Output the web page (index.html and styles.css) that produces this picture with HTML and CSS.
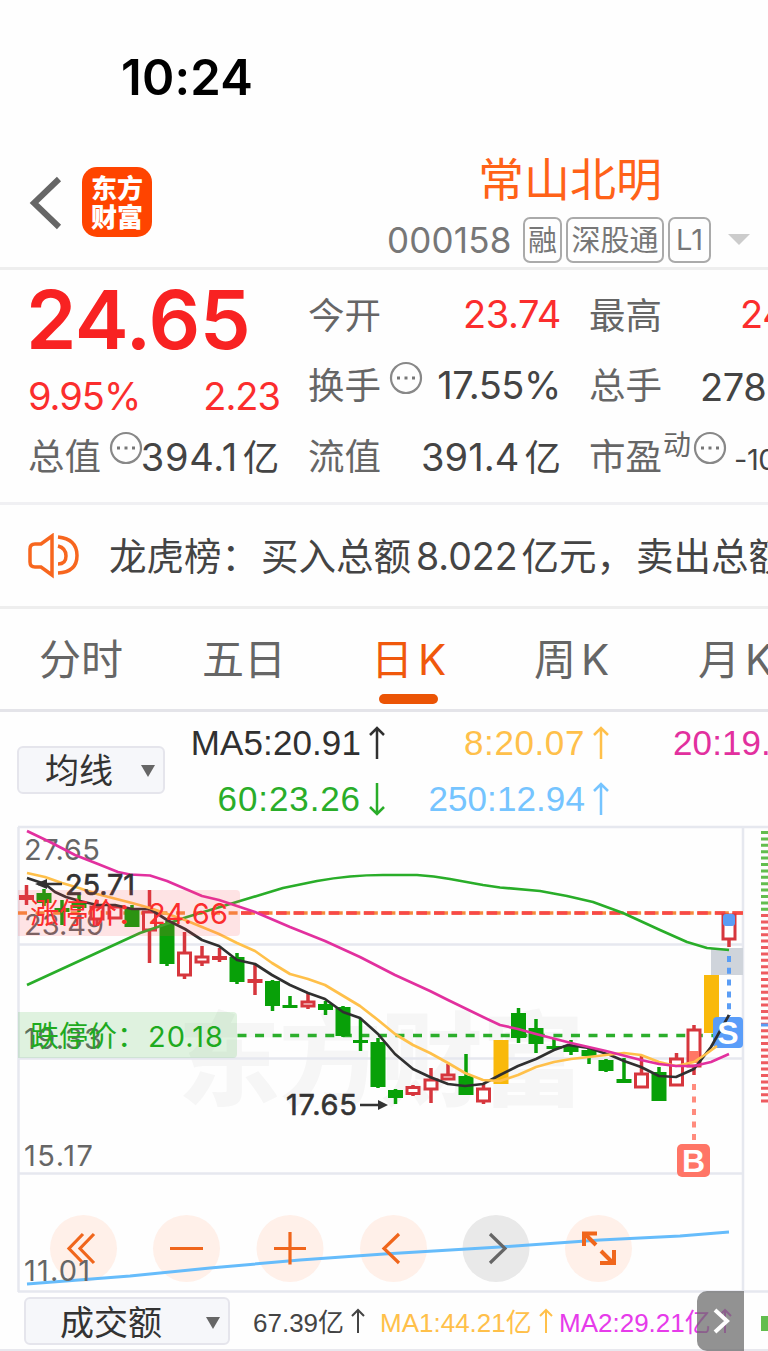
FILE: index.html
```
<!DOCTYPE html>
<html lang="zh-CN">
<head>
    <meta charset="UTF-8">
    <meta name="viewport" content="width=device-width, initial-scale=1.0">
    <title>常山北明 000158</title>
    <link rel="stylesheet" href="styles.css">
</head>
<body>

    <div class="status-bar">10:24</div>

    <div class="header">
        <svg class="back" width="34" height="54" viewBox="0 0 34 54"><path d="M31 3L6 27L31 51"/></svg>
        <div class="logo"><span>东方</span><span>财富</span></div>
        <div class="title">
            <h1>常山北明</h1>
            <div class="code">
                <span class="number">000158</span>
                <span class="tag tag-rong">融</span>
                <span class="tag tag-sgt">深股通</span>
                <span class="tag tag-l1">L1</span>
                <i class="caret"></i>
            </div>
        </div>
    </div>

    <!-- Cotação -->
    <div class="quote">
        <div class="col main">
            <div class="price">24.65</div>
            <div class="row change"><span class="red">9.95%</span><span class="red">2.23</span></div>
            <div class="row"><label>总值</label><svg class="more" viewBox="0 0 34 34"><use href="#more"/></svg><b class="total">394.1<em>亿</em></b></div>
        </div>
        <div class="col">
            <div class="row"><label>今开</label><b class="red">23.74</b></div>
            <div class="row"><label>换手</label><svg class="more" viewBox="0 0 34 34"><use href="#more"/></svg><b>17.55%</b></div>
            <div class="row"><label>流值</label><b class="float">391.4<em>亿</em></b></div>
        </div>
        <div class="col">
            <div class="row"><label>最高</label><b class="red high">24.66</b></div>
            <div class="row"><label>总手</label><b class="volume">278.1万</b></div>
            <div class="row"><label>市盈</label><sup>动</sup><svg class="more" viewBox="0 0 34 34"><use href="#more"/></svg><b class="pe">-102.5</b></div>
        </div>
    </div>

    <div class="notice">
        <svg width="52" height="46" viewBox="0 0 52 46">
            <path d="M25 3V42L14 34H8Q3 34 3 29V16Q3 11 8 11H14Z"/>
            <path d="M31 13Q39 15 39 23T31 31M31 4Q50 6 50 22.500T31 40"/>
        </svg>
        <span>龙虎榜：<i class="gap"></i>买入总额<em>8.022</em>亿元，<i class="gap"></i>卖出总额</span>
    </div>

    <div class="tabs">
        <span>分时</span>
        <span>五日</span>
        <span class="active">日<em>K</em></span>
        <span>周<em>K</em></span>
        <span>月<em>K</em></span>
    </div>

    <div class="ma-bar">
        <div class="select">均线<i></i></div>
        <div class="ma-list">
            <span class="ma5">MA5:20.91<svg width="20" height="36" viewBox="0 0 20 36"><path d="M10 34V3M3 10L10 3L17 10"/></svg></span>
            <span class="ma8">8:20.07<svg width="20" height="36" viewBox="0 0 20 36"><path d="M10 34V3M3 10L10 3L17 10"/></svg></span>
            <span class="ma20">20:19.48</span>
            <span class="ma60">60:23.26<svg width="20" height="36" viewBox="0 0 20 36"><path d="M10 2V33M3 26L10 33L17 26"/></svg></span>
            <span class="ma250">250:12.94<svg width="20" height="36" viewBox="0 0 20 36"><path d="M10 34V3M3 10L10 3L17 10"/></svg></span>
        </div>
    </div>

    <svg class="chart" width="768" height="468" viewBox="0 825 768 468">
        <defs>
            <g id="more">
                <circle cx="17" cy="17" r="15" fill="none" stroke="#888" stroke-width="2.200"/>
                <path d="M8 17h3M15.500 17h3M23 17h3" stroke="#777" stroke-width="3"/>
            </g>
        </defs>

        <text class="watermark" x="178" y="1098" textLength="406">东方财富</text>

        <g class="grid">
            <path d="M18 827H768M18 944.500H743M18 1058.500H743M18 1173.500H743M18 1291.500H768M18.500 827V1292M743 827V1292"/>
        </g>

        <g class="axis">
            <text x="24" y="860" textLength="76">27.65</text>
            <text x="24" y="935" textLength="80">23.49</text>
            <text x="24" y="1049" textLength="78">19.33</text>
            <text x="24" y="1166" textLength="69">15.17</text>
        </g>

        <!-- limites de alta e de baixa -->
        <path class="limit-orange" d="M18 913H240"/>
        <path class="limit-orange wide" d="M241 913H743"/>
        <path class="limit-up" d="M241 913H743"/>
        <path class="limit-down" d="M237.500 1035.500H714"/>

        <!-- candles -->
        <path class="wick green" d="M44 889V906M62 900V925M79 895V912M132 905V927M167 921V966M237 953V984M272.500 980V1011M290 996V1008M325.500 1001V1015M343 1006V1037M360.500 1019V1051M378 1038V1088M395.500 1089V1104M466 1054V1094M518.500 1008V1043M536 1019V1053M554 1038V1050M571 1040V1055M589 1048V1064M606 1059V1072M624 1058V1083M659 1067V1101"/>
        <path class="body green" d="M44 893V903M62 908V912M79 903V908M132 908V927M167 923V964M237 957V982M272.500 981V1006M290 1005V1008M325.500 1004V1010M343 1007V1036M360.500 1040V1043M378 1042V1087M395.500 1090V1098M466 1076V1095M518.500 1013V1038M536 1028V1044M554 1046V1049M571 1045V1052M589 1050V1056M606 1060V1071M624 1079V1083M659 1072V1101"/>
        <path class="wick red-line" d="M26.500 885V905M97 900V926M149.500 890V963M184.500 932V952M184.500 976V979M202 946V957M202 962V966M219.500 948V962M255 965V995M308 993V1001M308 1006V1009M413 1085V1087M413 1094V1096M431 1068V1079M431 1089V1103M448 1064V1074M483.500 1083V1089M483.500 1101V1104M641.500 1055V1073M676.500 1053V1058M694 1025V1029M694 1067V1075M729 939V947"/>
        <path class="body red-line" d="M26.500 895V900M219.500 956V960M255 979V983"/>
        <path class="hollow" d="M91 907h12v12h-12zM109 907h12v11h-12zM143.500 912h12v18h-12zM178.500 953h12v22h-12zM196 957h12v5h-12zM302 1002h12v4h-12zM407 1087.500h12v6h-12zM425 1080h12v9h-12zM442 1075h12v4h-12zM477.500 1089h12v12h-12zM635.500 1074h12v13h-12zM670.500 1059h12v26h-12zM688 1030h12v36h-12zM723 915h12v24h-12z"/>
        <path class="body yellow" d="M501 1040V1084M711.500 975V1033"/>

        <rect x="711" y="948" width="32" height="27" fill="#cfd4db"/>
        <rect x="723" y="914" width="12" height="12" rx="3" fill="#5a9df5"/>
        <rect x="689" y="1051" width="10" height="12" fill="#ff7765"/>
        <path class="mark-s" d="M729 956V1016"/>
        <path class="mark-b" d="M694 1084V1140"/>
        <rect x="713" y="1017" width="30" height="31" rx="4" fill="#5a9df9"/>

        <!-- médias móveis -->
        <g class="lines">
            <path stroke="#29ad29" d="M27 985L140 933L187 917L260 895L283 888L317 881Q350 875 383 875L417 875Q434 876 450 879L483 885L500 887.500L540 891L567 896L593 902L623 913L660 930L687 942L707 948L729 950"/>
            <path stroke="#303030" d="M27 878L45 884L55 892L66 897L80 901L97 905L115 905L132 909L150 909L167 920L185 929L202 940L219 946L237 960L255 964L272 975L290 985L308 993L325 999L343 1012L360 1018L378 1034L395 1054L413 1069L430 1077L448 1084L465 1086L483 1084L500 1075L518 1066L536 1059L554 1050L568 1045L589 1048L610 1055L624 1061L641 1067L659 1076L676 1077L694 1069L711 1047L729 1015"/>
            <path stroke="#ffc04a" d="M27 873L45 877L62 883L79 888L97 894L132 903L150 908L185 920L202 927L219 934L237 943L255 951L272 963L290 974L308 979L325 985L360 1006L378 1020L395 1034L413 1045L430 1053L448 1063L465 1073L483 1080L500 1081L518 1075L536 1067L554 1062L571 1059L606 1055L624 1053L641 1055L659 1062L676 1066L694 1062L706 1054L717 1046"/>
            <path stroke="#e2309e" d="M27 831L50 842L75 855L98 864L118 872L130 874.500L150 875.500L167 881L202 896L219 900L255 912L290 927L325 941L360 957L395 975L430 991L448 1000L483 1017L500 1025L518 1029L536 1034L571 1043L606 1051L641 1060L659 1064L676 1066L694 1066L711 1062L729 1054"/>
        </g>

        <g class="peak">
            <path d="M38 884H62M384 1105H360"/>
            <path class="tip" d="M35 884L47 879V889zM388 1105L378 1100V1110z"/>
            <text x="65" y="895" textLength="70">25.71</text>
            <text x="286" y="1115" textLength="71">17.65</text>
        </g>

        <path d="M18 890H236Q240 890 240 894V932Q240 936 236 936H18z" fill="#ff4b50" fill-opacity=".15"/>
        <path d="M18 1012H233Q237 1012 237 1016V1054Q237 1058 233 1058H18z" fill="#2fb02f" fill-opacity=".15"/>
        <g class="limit-text">
            <text x="30" y="924" fill="#fb2d2d">涨停价：</text>
            <text x="148" y="924" fill="#fb2d2d" textLength="80">24.66</text>
            <text x="30" y="1047" fill="#1eaa1e">跌停价：</text>
            <text x="148" y="1047" fill="#1eaa1e" textLength="75">20.18</text>
        </g>

        <text class="badge" x="728" y="1044">S</text>
        <rect x="677" y="1144" width="33" height="33" rx="5" fill="#ff7566"/>
        <text class="badge" x="693.500" y="1172">B</text>

        <!-- botões do gráfico -->
        <g fill="#fff0e9">
            <circle cx="83.500" cy="1248.500" r="33.500"/>
            <circle cx="186.500" cy="1248.500" r="33.500"/>
            <circle cx="290" cy="1248.500" r="33.500"/>
            <circle cx="393.500" cy="1248.500" r="33.500"/>
            <circle cx="496" cy="1248.500" r="33.500" fill="#e9e9e9"/>
            <circle cx="598.500" cy="1248.500" r="33.500"/>
        </g>
        <path class="ma250-line" d="M27 1284L130 1276L210 1268L300 1260L384 1254L500 1247L600 1240L680 1236L729 1232"/>
        <g class="icons">
            <path d="M83 1234L69 1248.500L83 1263M94 1234L80 1248.500L94 1263M170 1248.500H203M274 1248.500H306M290 1232V1264.500M399 1234L384 1248.500L399 1263"/>
            <path stroke="#666" d="M490 1234L505 1248.500L490 1263"/>
            <path stroke-width="4" d="M596 1245L585 1234M584 1246V1233.500H597M601 1251L613 1263M600 1263H614V1250"/>
        </g>
        <text class="axis-low" x="24" y="1281" textLength="66">11.01</text>

        <!-- livro de ofertas, cortado na borda -->
        <path class="depth" stroke="#63bd4e" d="M765 831V912"/>
        <path class="depth" stroke="#ee5b60" d="M765 914V1104"/>
        <path d="M761 1025H768" stroke="#5a9df5" stroke-width="3"/>
    </svg>

    <div class="volume-bar">
        <div class="select">成交额<i></i></div>
        <span class="v0">67.39亿<svg width="16" height="26" viewBox="0 0 16 26"><path d="M8 25V2M2 8L8 2L14 8"/></svg></span>
        <span class="v1">MA1:44.21亿<svg width="16" height="26" viewBox="0 0 16 26"><path d="M8 25V2M2 8L8 2L14 8"/></svg></span>
        <span class="v2">MA2:29.21亿<svg width="16" height="26" viewBox="0 0 16 26"><path d="M8 25V2M2 8L8 2L14 8"/></svg></span>
        <div class="next"><svg width="20" height="30" viewBox="0 0 20 30"><path d="M4 4L16 15L4 26"/></svg></div>
        <i class="block"></i>
    </div>

</body>
</html>
```
FILE: styles.css
```
* {
    box-sizing: border-box;
}
body {
    margin: 0;
    width: 768px;
    height: 1351px;
    overflow: hidden;
    background: #fefefe;
    font-family: Inter, "Noto Sans CJK SC", sans-serif;
    color: #444;
    white-space: nowrap;
}
em, i, b {
    font-style: normal;
    font-weight: normal;
}
svg {
    flex: none;
    fill: none;
}
.red {
    color: #fb2d2d;
}
.status-bar {
    height: 150px;
    padding: 46px 0 0 121px;
    font-size: 49px;
    font-weight: 600;
    line-height: 63px;
    letter-spacing: 0.2px;
    color: #000;
}

/* cabeçalho */
.header {
    display: flex;
    height: 120px;
    padding-left: 28px;
    border-bottom: 3px solid #eee;
}
.back {
    margin-top: 26px;
    stroke: #666;
    stroke-width: 6;
}
.logo {
    display: flex;
    flex-direction: column;
    align-items: center;
    width: 70px;
    height: 70px;
    margin: 17px 0 0 20px;
    padding-top: 7px;
    border-radius: 15px;
    background: #ff4400;
    color: #fff;
    font-size: 26px;
    font-weight: 900;
    line-height: 29px;
}
.title {
    margin-left: 235px;
}
.title h1 {
    margin: 0 0 0 91px;
    font-size: 46px;
    font-weight: 400;
    line-height: 59px;
    color: #ff6218;
}
.code {
    display: flex;
    align-items: center;
    height: 61px;
    color: #777;
}
.number {
    width: 136px;
    font-size: 35px;
    letter-spacing: 0.2px;
}
.tag {
    height: 46px;
    margin-right: 4px;
    border: 2.5px solid #aaa;
    border-radius: 7px;
    font-size: 29px;
    line-height: 43px;
    text-align: center;
}
.tag-rong {
    width: 39px;
}
.tag-sgt {
    width: 98px;
}
.tag-l1 {
    width: 43px;
    line-height: 42px;
}
.caret {
    margin-left: 13px;
    border: 11px solid transparent;
    border-top: 11px solid #ccc;
    border-bottom: 0;
}

/* cotação */
.quote {
    display: flex;
    gap: 28px;
    height: 235px;
    padding: 9px 0 0 28px;
    border-bottom: 3px solid #f0f0f3;
}
.col {
    flex: none;
    width: 253px;
}
.row {
    display: flex;
    align-items: center;
    height: 70.500px;
    font-size: 38px;
}
.row label {
    margin-top: -2px;
    font-size: 36.500px;
    color: #666;
}
.row b {
    margin-left: auto;
    letter-spacing: -0.4px;
}
.row b em {
    margin-left: 5px;
    font-size: 36.500px;
}
.row b.total {
    letter-spacing: 0.7px;
}
.row b.float {
    letter-spacing: 0.1px;
}
.row sup {
    margin: -20px 0 0 1px;
    font-size: 28px;
    line-height: 28px;
    color: #666;
}
.more {
    width: 34px;
    height: 34px;
    margin: -14px -10px 0 8px;
}
.main {
    width: 252px;
}
.price {
    height: 88px;
    margin-left: -2px;
    font-size: 81px;
    font-weight: 600;
    line-height: 82px;
    letter-spacing: -0.5px;
    color: #f82222;
}
.row.change {
    height: 53px;
    padding-top: 6px;
    justify-content: space-between;
    align-items: flex-start;
    line-height: 46px;
    letter-spacing: -1px;
}
.row b.high {
    margin-left: 78px;
}
.row b.volume {
    margin-left: 38px;
}
.row b.pe {
    margin: 8px 0 0 17px;
    font-size: 29px;
}
.row sup + svg {
    margin-left: 2px;
}

/* aviso */
.notice {
    display: flex;
    align-items: center;
    height: 104px;
    padding-left: 27px;
    border-bottom: 3px solid #eee;
    font-size: 37.500px;
}
.notice svg {
    margin-right: 30px;
    stroke: #f7661e;
    stroke-width: 3.5;
}
.notice span {
    margin-top: -4px;
}
.notice em {
    margin: 0 4px 0 5px;
}
.notice .gap {
    margin-left: 2px;
}

/* abas */
.tabs {
    display: flex;
    height: 103px;
    padding: 20px 0 0 39px;
    border-bottom: 3px solid #e4e4e9;
    font-size: 42px;
    line-height: 62px;
    color: #666;
}
.tabs span {
    flex: none;
    width: 163px;
}
.tabs em {
    margin-left: 5px;
}
.tabs .active {
    position: relative;
    width: 163px;
    margin-left: 6px;
    color: #f0580c;
}
.tabs .active::after {
    content: "";
    position: absolute;
    left: 8px;
    top: 65px;
    width: 59px;
    height: 10px;
    border-radius: 5px;
    background: #eb5405;
}
.tabs .active ~ span {
    width: 164px;
}

/* médias */
.select {
    display: flex;
    align-items: center;
    justify-content: space-between;
    flex: none;
    border: 2px solid #e5e5ec;
    border-radius: 6px;
    background: #f6f7fa;
    font-size: 34px;
    line-height: 48px;
    color: #333;
}
.select i {
    border: 7px solid transparent;
    border-top: 12px solid #666;
    border-bottom: 0;
}
.ma-bar {
    display: flex;
    height: 113px;
    padding-left: 17px;
}
.ma-bar .select {
    width: 148px;
    height: 48px;
    margin-top: 34px;
    padding: 2px 8px 0 26px;
}
.ma-list {
    display: grid;
    grid-template-columns: 222px 224px 200px;
    grid-template-rows: 56px 56px;
    padding-top: 3px;
    font-family: "Liberation Sans", Arial, sans-serif;
    font-size: 35px;
}
.ma-list span {
    display: flex;
    align-items: center;
    justify-content: flex-end;
    letter-spacing: 0.1px;
}
.ma-list svg {
    margin-left: 6px;
    stroke: currentColor;
    stroke-width: 2.5;
}
.ma5 {
    color: #303030;
}
.ma-list .ma8 {
    letter-spacing: 0.6px;
    color: #ffc04a;
}
.ma-list .ma20 {
    justify-content: flex-start;
    padding-left: 62px;
    color: #e2309e;
}
.ma-list .ma60 {
    letter-spacing: 0.9px;
    color: #29ad29;
}
.ma250 {
    color: #75c4ff;
}

/* gráfico */
.chart {
    display: block;
    font-size: 29px;
}
.watermark {
    font-size: 102px;
    font-weight: 900;
    fill: #f6f6f6;
}
.grid {
    stroke: #e6e8ef;
    stroke-width: 2.5;
}
.axis, .axis-low {
    fill: #666;
}
.limit-orange {
    stroke: #f58b3c;
    stroke-width: 3.5;
    stroke-dasharray: 9 8.55;
}
.limit-orange.wide {
    stroke-dasharray: 14 3.55;
}
.limit-up {
    stroke: #f84848;
    stroke-width: 3.5;
    stroke-dasharray: 10.5 7.05;
}
.limit-down {
    stroke: #2cae2c;
    stroke-width: 3.5;
    stroke-dasharray: 9 8.55;
}
.wick {
    stroke-width: 3.5;
}
.body {
    stroke-width: 15;
}
.green {
    stroke: #08a008;
}
.red-line {
    stroke: #d6363d;
}
.yellow {
    stroke: #f9b90b;
}
.hollow {
    fill: #fff;
    stroke: #d6363d;
    stroke-width: 3;
}
.mark-s {
    stroke: #5a9df5;
    stroke-width: 4;
    stroke-dasharray: 6 5.8;
}
.mark-b {
    stroke: #ff8b7d;
    stroke-width: 4;
    stroke-dasharray: 6 6.5;
}
.lines {
    stroke-width: 2.7;
    stroke-linejoin: round;
}
.peak {
    stroke: #333;
    stroke-width: 2.5;
}
.peak text {
    fill: #333;
    stroke-width: 0.6;
}
.peak .tip {
    fill: #333;
    stroke: none;
}
.limit-text {
    font-size: 29px;
}
.badge {
    font-family: "Liberation Sans", Arial, sans-serif;
    font-size: 32px;
    font-weight: bold;
    text-anchor: middle;
    fill: #fff;
}
.ma250-line {
    stroke: #66bcfb;
    stroke-width: 3;
}
.icons {
    stroke: #f0661c;
    stroke-width: 3.2;
}
.depth {
    stroke-width: 8;
    stroke-dasharray: 3 3.4;
}

/* volume */
.volume-bar {
    position: relative;
    display: flex;
    align-items: center;
    height: 58px;
    padding-left: 24px;
    border-bottom: 2px solid #e8e8ee;
    font-family: "Liberation Sans", "Noto Sans CJK SC", sans-serif;
    font-size: 26px;
}
.volume-bar .select {
    width: 206px;
    height: 48px;
    margin-right: 23px;
    padding: 3px 8px 0 34px;
}
.volume-bar span {
    display: flex;
    align-items: center;
    flex: none;
    margin-top: -2px;
}
.volume-bar span svg {
    margin: 2px 0 0 6px;
    stroke: currentColor;
    stroke-width: 2;
}
.v0 {
    width: 127px;
}
.v1 {
    width: 179px;
    color: #ffc04a;
}
.v2 {
    color: #e63bea;
}
.next {
    position: absolute;
    left: 697px;
    top: -2px;
    display: flex;
    align-items: center;
    justify-content: center;
    width: 47px;
    height: 60px;
    border-radius: 10px 0 0 10px;
    background: rgba(110, 110, 110, 0.75);
}
.next svg {
    stroke: #fff;
    stroke-width: 4;
}
.block {
    position: absolute;
    left: 761px;
    top: 23px;
    width: 7px;
    height: 15px;
    background: #63bd4e;
}
```
